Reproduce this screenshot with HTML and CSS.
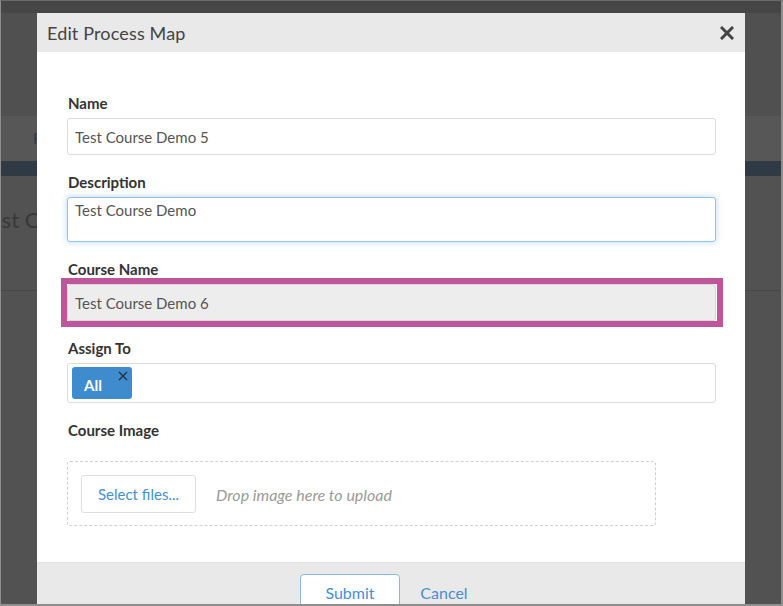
FILE: index.html
```html
<!DOCTYPE html>
<html lang="en">
<head>
<meta charset="utf-8">
<title>Edit Process Map</title>
<link rel="stylesheet" href="styles.css">
</head>
<body>
<div class="screen">
  <!-- page behind the modal, dimmed by the backdrop -->
  <div class="page">
    <div class="page-top"></div>
    <div class="page-head"></div>
    <div class="page-tabs"><span class="page-tab">F</span></div>
    <div class="page-bar"></div>
    <div class="page-title">est C</div>
    <div class="page-rest"></div>
  </div>

  <div class="modal">
    <div class="modal-header">
      <span class="modal-title">Edit Process Map</span>
      <svg class="modal-close" width="14" height="14" viewBox="0 0 14 14" aria-hidden="true">
        <path d="M2 2 L12 12 M12 2 L2 12" stroke="#444" stroke-width="3" stroke-linecap="square"/>
      </svg>
    </div>

    <form class="modal-body">
      <div class="field">
        <label class="field-label">Name</label>
        <div class="input">Test Course Demo 5</div>
      </div>

      <div class="field">
        <label class="field-label">Description</label>
        <div class="input textarea focused">Test Course Demo</div>
      </div>

      <div class="field">
        <label class="field-label">Course Name</label>
        <div class="highlight">
          <div class="input readonly">Test Course Demo 6</div>
        </div>
      </div>

      <div class="field">
        <label class="field-label">Assign To</label>
        <div class="input multiselect">
          <span class="tag">All
            <svg class="tag-remove" width="10" height="10" viewBox="0 0 10 10" aria-hidden="true">
              <path d="M1 1 L9 9 M9 1 L1 9" stroke="#1e2f40" stroke-width="1.3"/>
            </svg>
          </span>
        </div>
      </div>

      <div class="field">
        <label class="field-label">Course Image</label>
        <div class="dropzone">
          <span class="btn-select">Select files...</span>
          <span class="drop-hint">Drop image here to upload</span>
        </div>
      </div>
    </form>

    <div class="modal-footer">
      <button type="button" class="btn btn-primary">Submit</button>
      <button type="button" class="btn btn-link">Cancel</button>
    </div>
  </div>
</div>
</body>
</html>
```

FILE: styles.css
```css
* {
  box-sizing: border-box;
}

html, body {
  margin: 0;
  padding: 0;
  height: 100%;
  overflow: hidden;
}

body {
  font-family: Lato, "Open Sans", "Liberation Sans", sans-serif;
  background: #8c8c8c;
}

.screen {
  position: relative;
  width: 783px;
  height: 606px;
  border-left: 1px solid #8e8e8e;
  border-top: 1px solid #6a6a6a;
  border-right: 2px solid #8e8e8e;
  border-bottom: 2px solid #8e8e8e;
  overflow: hidden;
}

/* dimmed background page */
.page {
  display: flex;
  flex-direction: column;
  height: 100%;
  background: #525252;
}

.page-top {
  height: 12px;
  background: #464646;
}

.page-head {
  height: 103px;
  background: #505050;
}

.page-tabs {
  height: 45px;
  background: #575757;
  padding: 12px 0 0 32px;
}

.page-tab {
  font-size: 15px;
  color: #2c3a52;
}

.page-bar {
  height: 15px;
  background: #2f3a45;
}

.page-title {
  height: 115px;
  padding: 30px 0 0 0;
  margin-left: -11px;
  font-size: 22px;
  color: #383838;
  background: #525252;
  border-bottom: 1px solid #474747;
}

.page-rest {
  flex: 1;
  background: #525252;
}

/* modal */
.modal {
  position: absolute;
  left: 36px;
  top: 12px;
  width: 708px;
  background: #fff;
}

.modal-header {
  height: 39px;
  background: #e9e9e9;
  display: flex;
  align-items: center;
  justify-content: space-between;
  padding: 0 10px 0 10px;
}

.modal-title {
  font-size: 18px;
  color: #444;
  letter-spacing: 0.15px;
}

.modal-close {
  display: block;
  margin-top: 1px;
  margin-right: 1px;
}

.modal-body {
  padding: 43px 29px 36px 30px;
  display: flex;
  flex-direction: column;
  gap: 19px;
}

.field {
  display: flex;
  flex-direction: column;
}

.field-label {
  font-size: 15px;
  font-weight: 700;
  line-height: 17px;
  color: #333;
  margin: 0 0 6px 1px;
}

.input {
  height: 37px;
  border: 1px solid #dcdcdc;
  border-radius: 3px;
  background: #fff;
  padding: 0 7px;
  display: flex;
  align-items: center;
  font-size: 15px;
  color: #555;
}

.textarea {
  height: 45px;
  align-items: flex-start;
  padding-top: 3px;
}

.focused {
  border-color: #93c4ef;
  box-shadow: 0 0 6px rgba(120, 180, 235, 0.55);
}

.readonly {
  background: #ededed;
  border-color: #d8d8d8;
}

/* annotation frame around the course name input */
.highlight {
  position: relative;
}

.highlight::after {
  content: "";
  position: absolute;
  inset: -6px -7px -6px -6px;
  border: 6px solid #bf569b;
  pointer-events: none;
}

.multiselect {
  height: 40px;
  padding: 0 4px;
}

.tag {
  position: relative;
  width: 60px;
  height: 32px;
  border-radius: 3px;
  background: #3e8bcd;
  color: #fff;
  font-size: 15px;
  font-weight: 700;
  display: flex;
  align-items: center;
  padding: 3px 0 0 12px;
}

.tag-remove {
  position: absolute;
  top: 4px;
  right: 4px;
}

.dropzone {
  margin-top: 16px;
  width: 589px;
  height: 65px;
  border: 1px dashed #cfcfcf;
  border-radius: 3px;
  display: flex;
  align-items: center;
  padding: 0 0 0 13px;
  gap: 20px;
}

.btn-select {
  width: 115px;
  height: 38px;
  border: 1px solid #dedede;
  border-radius: 3px;
  display: flex;
  align-items: center;
  justify-content: center;
  font-size: 15px;
  color: #4490d2;
}

.drop-hint {
  font-size: 16px;
  font-style: italic;
  color: #9a9a9a;
  padding-top: 2px;
}

.modal-footer {
  background: #e9e9e9;
  border-top: 1px solid #e2e2e2;
  height: 60px;
  display: flex;
  justify-content: center;
  align-items: flex-start;
  padding: 11px 0 0 0;
  gap: 6px;
}

.btn {
  font-family: inherit;
  font-size: 16px;
  height: 36px;
  border-radius: 4px;
  color: #4490d2;
  cursor: pointer;
  padding: 0;
}

.btn-primary {
  width: 100px;
  background: #fff;
  border: 1px solid #8fb6dc;
}

.btn-link {
  width: 76px;
  background: transparent;
  border: 1px solid transparent;
}
```
